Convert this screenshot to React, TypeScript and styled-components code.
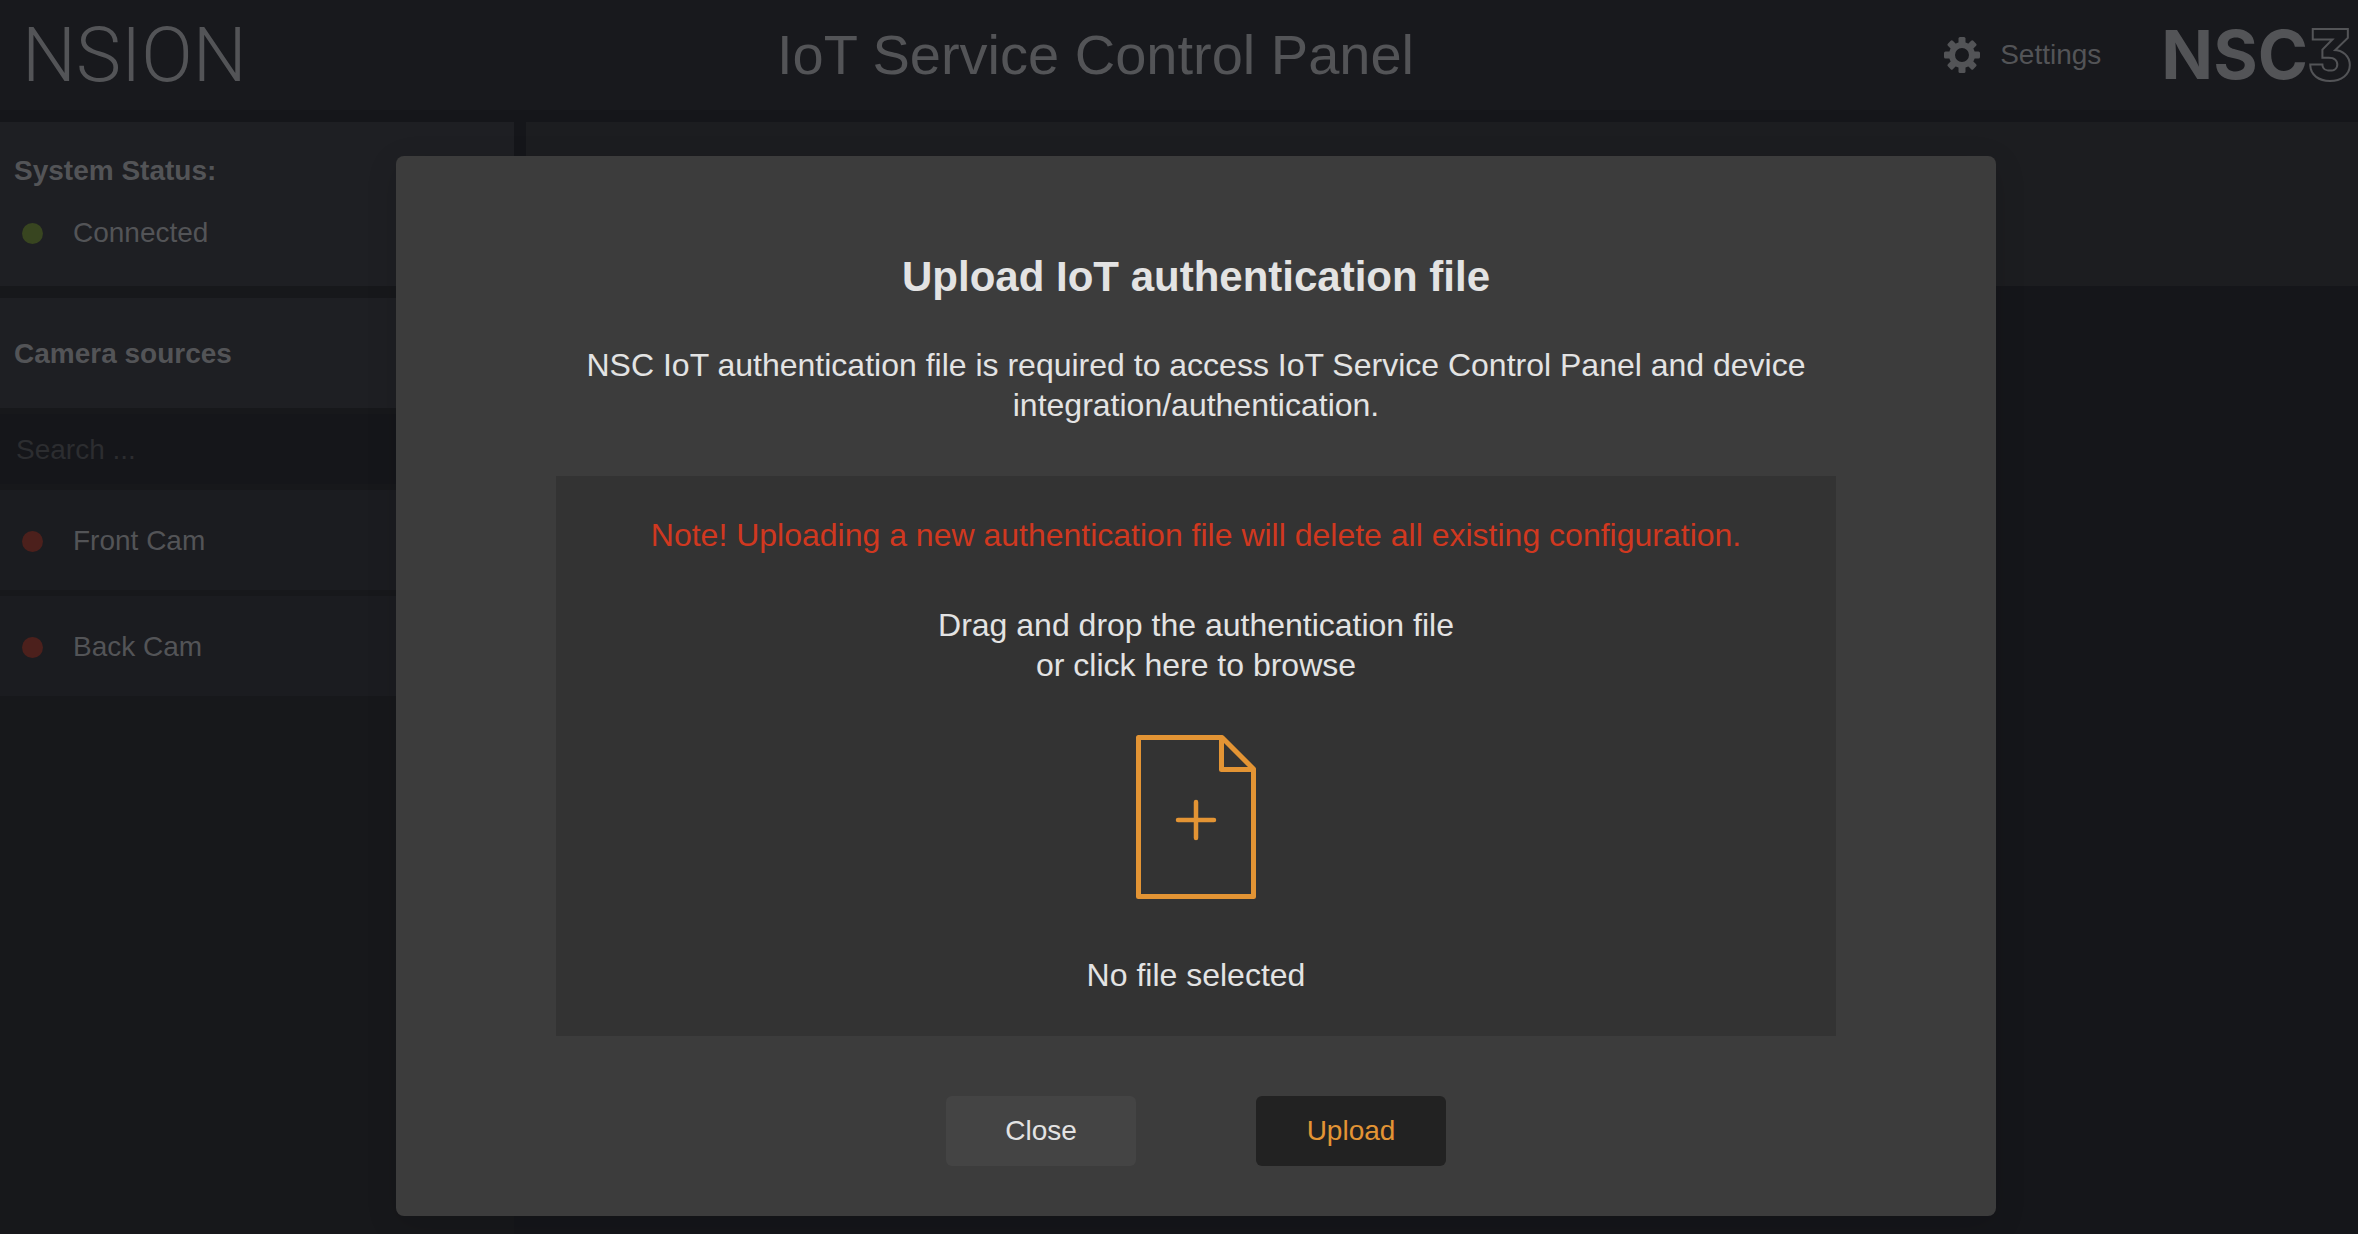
import React, { useState } from "react";
import styled, { createGlobalStyle } from "styled-components";

const GlobalStyle = createGlobalStyle`
  *, *::before, *::after { box-sizing: border-box; }
  body {
    margin: 0;
    background: #15161a;
    color: #535457;
    font-family: "Liberation Sans", Helvetica, Arial, sans-serif;
    font-size: 28px;
    line-height: 32px;
  }
  h1, h2, p, ul { margin: 0; padding: 0; }
  button, input { font: inherit; }
`;

const Page = styled.div`
  display: flex;
  flex-direction: column;
  gap: 12px;
  min-height: 100vh;
`;

const Header = styled.header`
  display: flex;
  align-items: center;
  justify-content: space-between;
  height: 110px;
  padding: 0 6px 0 22px;
  background: #18191d;
`;

const Brand = styled.span`
  font-family: Roboto, sans-serif;
  font-size: 76px;
  font-weight: 300;
  line-height: 110px;
`;

const PageTitle = styled.h1`
  font-size: 56px;
  font-weight: 400;
  line-height: 64px;
`;

const HeaderTools = styled.div`
  display: flex;
  align-items: center;
  gap: 60px;
`;

const SettingsButton = styled.button`
  display: flex;
  align-items: center;
  gap: 20px;
  padding: 0;
  border: 0;
  background: none;
  color: inherit;
  line-height: 32px;
  cursor: pointer;
`;

const ProductName = styled.span`
  padding-bottom: 2px;
  font-family: Inter, sans-serif;
  font-size: 68px;
  font-weight: 700;
  line-height: 106px;
  white-space: nowrap;
`;

const ProductVersion = styled.span`
  font-feature-settings: "cv09";
  color: #18191d;
  -webkit-text-stroke: 4px #535457;
  paint-order: stroke fill;
`;

const Body = styled.div`
  display: grid;
  grid-template-columns: 514px 1fr;
  gap: 12px;
  flex: 1;
`;

const Sidebar = styled.aside`
  background: #17181b;
`;

const StatusPanel = styled.section`
  display: flex;
  flex-direction: column;
  gap: 30px;
  height: 164px;
  padding-top: 33px;
  background: #1e1f23;
`;

const SectionTitle = styled.h2`
  padding: 0 14px;
  font-size: 28px;
  font-weight: 700;
  line-height: 32px;
`;

const Item = styled.div`
  display: flex;
  align-items: center;
  gap: 30px;
  padding: 0 22px;
`;

const Dot = styled.span<{ $color: string }>`
  width: 21px;
  height: 21px;
  border-radius: 50%;
  background: ${(p) => p.$color};
`;

const SourcesHeading = styled.div`
  display: flex;
  align-items: center;
  height: 110px;
  margin-top: 12px;
  padding-top: 2px;
  background: #1e1f23;
`;

const SearchInput = styled.input`
  display: block;
  width: 100%;
  height: 70px;
  margin: 6px 0;
  padding: 2px 16px 0;
  border: 0;
  background: #15161a;
  color: #535457;
  &::placeholder { color: #2c2d30; opacity: 1; }
`;

const SourceList = styled.ul`
  display: flex;
  flex-direction: column;
  gap: 6px;
  list-style: none;
`;

const Source = styled(Item).attrs({ as: "li" })`
  height: 100px;
  padding-top: 2px;
  background: #1b1c20;
`;

const DetailPanel = styled.main`
  height: 164px;
  background: #1c1d20;
`;

const Overlay = styled.div`
  position: absolute;
  inset: 0;
  display: flex;
  align-items: flex-start;
  justify-content: center;
  padding: 156px 0 18px 34px;
`;

const Dialog = styled.div`
  display: flex;
  flex-direction: column;
  align-items: center;
  width: 1600px;
  max-width: 100%;
  padding: 97px 0 50px;
  border-radius: 8px;
  background: #3c3c3c;
  box-shadow: 0 8px 32px rgba(0, 0, 0, 0.12);
  color: #e3e3e3;
  font-size: 32px;
  line-height: 40px;
  text-align: center;
`;

const DialogTitle = styled.h2`
  font-size: 42px;
  line-height: 48px;
`;

const Description = styled.p`
  width: 80%;
  margin: 44px 0 51px;
`;

const DropZone = styled.label`
  display: flex;
  flex-direction: column;
  align-items: center;
  gap: 50px;
  width: 80%;
  padding: 39px 0 41px;
  background: #333333;
  cursor: pointer;
`;

const FileInput = styled.input`
  position: absolute;
  width: 1px;
  height: 1px;
  opacity: 0;
`;

const Warning = styled.span`
  color: #d03820;
`;

const FileIcon = styled.svg`
  display: block;
  margin-bottom: 6px;
`;

const Actions = styled.div`
  display: flex;
  gap: 120px;
  margin-top: 60px;
`;

const ActionButton = styled.button<{ $primary?: boolean }>`
  width: 190px;
  height: 70px;
  border: 0;
  border-radius: 6px;
  background: ${(p) => (p.$primary ? "#222222" : "#444444")};
  color: ${(p) => (p.$primary ? "#e39434" : "#e3e3e3")};
  font-size: 28px;
  cursor: pointer;
`;

const GREEN = "#384520";
const RED = "#4c201c";

const cameras = ["Front Cam", "Back Cam"];

function Gear() {
  return (
    <svg width="36" height="36" viewBox="-18 -18 36 36" aria-hidden="true">
      <circle r="10" fill="none" stroke="currentColor" strokeWidth="6" />
      {[0, 45, 90, 135, 180, 225, 270, 315].map((a) => (
        <rect
          key={a}
          x="-3.5"
          y="-18"
          width="7"
          height="9"
          rx="1.5"
          fill="currentColor"
          transform={`rotate(${a})`}
        />
      ))}
    </svg>
  );
}

function AddFile() {
  return (
    <FileIcon
      width="120"
      height="164"
      viewBox="0 0 120 164"
      fill="none"
      stroke="#e39434"
      strokeLinejoin="round"
      strokeLinecap="round"
      aria-hidden="true"
    >
      <path d="M2.5 2.5H86L117.5 34V161.5H2.5Z" strokeWidth="5" />
      <path d="M85.5 3V34.5H117" strokeWidth="5" />
      <path d="M60 67V103M42 85H78" strokeWidth="4.5" />
    </FileIcon>
  );
}

export default function App() {
  const [fileName, setFileName] = useState("No file selected");

  return (
    <>
      <GlobalStyle />
      <Page>
        <Header>
          <Brand>NSION</Brand>
          <PageTitle>IoT Service Control Panel</PageTitle>
          <HeaderTools>
            <SettingsButton type="button">
              <Gear />
              Settings
            </SettingsButton>
            <ProductName>
              NSC<ProductVersion>3</ProductVersion>
            </ProductName>
          </HeaderTools>
        </Header>
        <Body>
          <Sidebar>
            <StatusPanel>
              <SectionTitle>System Status:</SectionTitle>
              <Item>
                <Dot $color={GREEN} />
                Connected
              </Item>
            </StatusPanel>
            <SourcesHeading>
              <SectionTitle>Camera sources</SectionTitle>
            </SourcesHeading>
            <SearchInput type="search" placeholder="Search ..." aria-label="Search camera sources" />
            <SourceList>
              {cameras.map((name) => (
                <Source key={name}>
                  <Dot $color={RED} />
                  {name}
                </Source>
              ))}
            </SourceList>
          </Sidebar>
          <DetailPanel />
        </Body>
      </Page>
      <Overlay>
        <Dialog role="dialog" aria-modal="true" aria-labelledby="upload-title">
          <DialogTitle id="upload-title">Upload IoT authentication file</DialogTitle>
          <Description>
            NSC IoT authentication file is required to access IoT Service Control Panel and device
            integration/authentication.
          </Description>
          <DropZone>
            <FileInput
              type="file"
              onChange={(e) => setFileName(e.target.files?.[0]?.name ?? "No file selected")}
            />
            <Warning>Note! Uploading a new authentication file will delete all existing configuration.</Warning>
            <span>
              Drag and drop the authentication file
              <br />
              or click here to browse
            </span>
            <AddFile />
            <span>{fileName}</span>
          </DropZone>
          <Actions>
            <ActionButton type="button">Close</ActionButton>
            <ActionButton type="button" $primary>
              Upload
            </ActionButton>
          </Actions>
        </Dialog>
      </Overlay>
    </>
  );
}
